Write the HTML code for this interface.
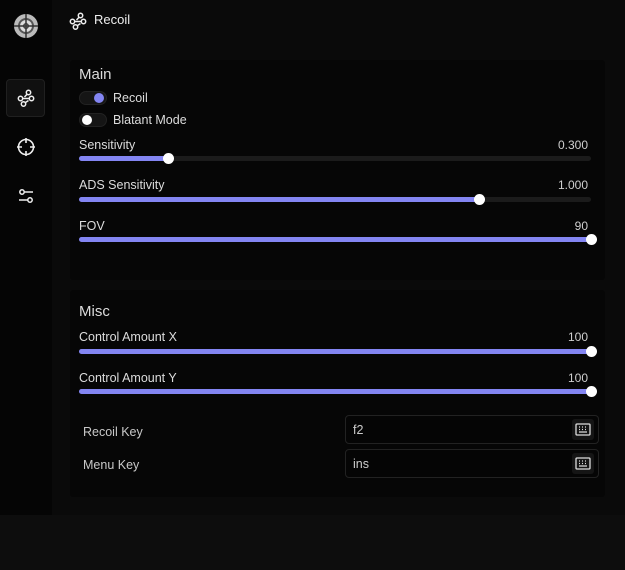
<!DOCTYPE html>
<html><head><meta charset="utf-8"><style>
*{margin:0;padding:0;box-sizing:border-box}
body{width:625px;height:570px;background:#0a0a0a;font-family:"Liberation Sans",sans-serif;color:#e6e6e6;position:relative;overflow:hidden}
.side{position:absolute;left:0;top:0;width:52px;height:515px;background:#050505}
.bottom{position:absolute;left:0;top:515px;width:625px;height:55px;background:#0d0d0d}
.sb{position:absolute;left:6px;width:39px;height:38px;border-radius:4px;display:flex;align-items:center;justify-content:center}
.sb.act{background:#101010;border:1px solid #202020}
.panel{position:absolute;left:70px;width:535px;background:#060606;border-radius:3px}
.abs{position:absolute}
.h{font-size:15px;color:#dcdcdc}
.lbl{font-size:12.5px;color:#dcdcdc}
.val{font-size:12px;color:#cfcfcf;text-align:right}
.track{position:absolute;left:79px;width:512px;height:5px;border-radius:3px;background:#1b1b1b}
.fill{position:absolute;left:0;top:0;height:5px;border-radius:3px;background:#8385f2}
.thumb{position:absolute;top:-3px;width:11px;height:11px;border-radius:50%;background:#fff;margin-left:-5px}
.tog{position:absolute;left:79px;width:28px;height:14px;border-radius:7px;background:#151515;border:1px solid #222}
.knob{position:absolute;top:1px;width:10px;height:10px;border-radius:50%}
.inp{position:absolute;left:345px;width:254px;height:29px;border:1px solid #222;border-radius:4px;background:#050505;font-size:12.5px;color:#ccc;padding:7px 7px}
.kb{position:absolute;right:4px;top:3px;width:22px;height:21px;border-radius:3px;background:#151515;display:flex;align-items:center;justify-content:center}
</style></head><body>
<div class="side"></div>
<div class="bottom"></div>
<svg class="abs" style="left:12px;top:12px" width="28" height="28" viewBox="0 0 28 28">
<circle cx="14" cy="14" r="12" fill="#bbb"/><circle cx="14" cy="14" r="8" fill="#555"/><circle cx="14" cy="14" r="6" fill="#ddd"/><circle cx="14" cy="14" r="3" fill="#444"/><circle cx="14" cy="14" r="1.5" fill="#fff"/>
<path d="M14 2v24M2 14h24" stroke="#333" stroke-width="1.5"/></svg>
<svg class="abs" style="left:69px;top:12px" width="18" height="18" viewBox="0 0 18 18" fill="none" stroke="#eee" stroke-width="1.5">
<circle cx="11.5" cy="3.5" r="2.2"/><circle cx="3.5" cy="9.5" r="2.2"/><circle cx="14.5" cy="9.5" r="2.2"/><circle cx="6.5" cy="15" r="2.2"/><path d="M5.7 9.5h6.6M10 5.2L7.5 8M11.5 11.5L8.5 13.5"/></svg>
<div class="abs" style="left:94px;top:12px;font-size:13px;color:#eee">Recoil</div>
<div class="sb act" style="top:79px"><svg width="18" height="18" viewBox="0 0 18 18" fill="none" stroke="#eee" stroke-width="1.5"><circle cx="11.5" cy="3.5" r="2.2"/><circle cx="3.5" cy="9.5" r="2.2"/><circle cx="14.5" cy="9.5" r="2.2"/><circle cx="6.5" cy="15" r="2.2"/><path d="M5.7 9.5h6.6M10 5.2L7.5 8M11.5 11.5L8.5 13.5"/></svg></div>
<div class="sb" style="top:128px"><svg width="20" height="20" viewBox="0 0 20 20" fill="none" stroke="#eee" stroke-width="1.6"><circle cx="10" cy="10" r="7.5"/><path d="M10 1v5M10 14v5M1 10h5M14 10h5"/></svg></div>
<div class="sb" style="top:177px"><svg width="18" height="18" viewBox="0 0 18 18" fill="none" stroke="#eee" stroke-width="1.5"><circle cx="5" cy="5" r="2.2"/><path d="M7.2 5H16"/><circle cx="13" cy="13" r="2.2"/><path d="M2 13h8.8"/></svg></div>

<div class="panel" style="top:60px;height:220px"></div>
<div class="panel" style="top:290px;height:207px"></div>

<div class="abs h" style="left:79px;top:66px">Main</div>
<div class="tog" style="top:91px"><div class="knob" style="left:14px;background:#8385f2"></div></div>
<div class="abs lbl" style="left:113px;top:91px">Recoil</div>
<div class="tog" style="top:113px"><div class="knob" style="left:2px;background:#fff"></div></div>
<div class="abs lbl" style="left:113px;top:113px">Blatant Mode</div>

<div class="abs lbl" style="left:79px;top:138px">Sensitivity</div><div class="abs val" style="right:37px;top:138px">0.300</div>
<div class="track" style="top:156px"><div class="fill" style="width:89px"></div><div class="thumb" style="left:89px"></div></div>
<div class="abs lbl" style="left:79px;top:178px">ADS Sensitivity</div><div class="abs val" style="right:37px;top:178px">1.000</div>
<div class="track" style="top:197px"><div class="fill" style="width:400px"></div><div class="thumb" style="left:400px"></div></div>
<div class="abs lbl" style="left:79px;top:219px">FOV</div><div class="abs val" style="right:37px;top:219px">90</div>
<div class="track" style="top:237px"><div class="fill" style="width:512px"></div><div class="thumb" style="left:512px"></div></div>

<div class="abs h" style="left:79px;top:303px">Misc</div>
<div class="abs lbl" style="left:79px;top:330px">Control Amount X</div><div class="abs val" style="right:37px;top:330px">100</div>
<div class="track" style="top:349px"><div class="fill" style="width:512px"></div><div class="thumb" style="left:512px"></div></div>
<div class="abs lbl" style="left:79px;top:371px">Control Amount Y</div><div class="abs val" style="right:37px;top:371px">100</div>
<div class="track" style="top:389px"><div class="fill" style="width:512px"></div><div class="thumb" style="left:512px"></div></div>

<div class="abs lbl" style="left:83px;top:425px;color:#c8c8c8">Recoil Key</div>
<div class="inp" style="top:415px">f2<div class="kb"><svg width="16" height="13" viewBox="0 0 16 13" fill="none" stroke="#ddd" stroke-width="1.3"><rect x="1" y="1" width="14" height="11" rx="1"/><path d="M4 4h1M7 4h1M10 4h1M4 6.5h1M7 6.5h1M10 6.5h1M4 9h8"/></svg></div></div>
<div class="abs lbl" style="left:83px;top:458px;color:#c8c8c8">Menu Key</div>
<div class="inp" style="top:449px">ins<div class="kb"><svg width="16" height="13" viewBox="0 0 16 13" fill="none" stroke="#ddd" stroke-width="1.3"><rect x="1" y="1" width="14" height="11" rx="1"/><path d="M4 4h1M7 4h1M10 4h1M4 6.5h1M7 6.5h1M10 6.5h1M4 9h8"/></svg></div></div>
</body></html>
